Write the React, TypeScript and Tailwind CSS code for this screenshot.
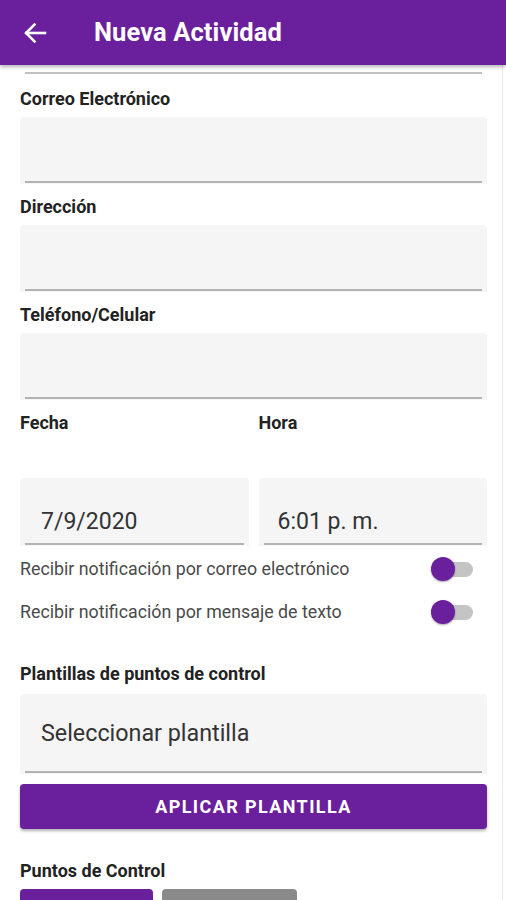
import React from "react";

function Label({ children, className = "" }: { children: React.ReactNode; className?: string }) {
  return (
    <div className={"text-[18px] leading-[20px] font-bold text-[#222] " + className}>{children}</div>
  );
}

function Field({ h, children, className = "" }: { h: string; children?: React.ReactNode; className?: string }) {
  return (
    <div className={"relative bg-[#f5f5f5] rounded-t-[4px] " + h + " " + className}>
      {children}
      <div className="absolute left-[5px] right-[5px] bottom-[1px] h-[2px] bg-[#b3b3b3]" />
    </div>
  );
}

function Toggle() {
  return (
    <div className="relative w-[42px] h-[24px] mr-[14px]">
      <div className="absolute left-[8px] right-0 top-[5px] h-[15px] rounded-full bg-[#c4c4c4]" />
      <div className="absolute left-0 top-0 w-[24px] h-[24px] rounded-full bg-[#6a1f9c] shadow-[0_1px_2px_rgba(0,0,0,0.35)]" />
    </div>
  );
}

export default function App() {
  return (
    <div
      className="w-[506px] h-[900px] overflow-hidden bg-white relative"
      style={{ fontFamily: "Roboto, 'Liberation Sans', sans-serif" }}
    >
      <div className="relative z-10 h-[65px] bg-[#6a1f9c] flex items-center shadow-[0_2px_4px_rgba(0,0,0,0.3)]">
        <svg
          className="ml-[23px]"
          width="24"
          height="24"
          viewBox="0 0 24 24"
          fill="none"
          stroke="white"
          strokeWidth="2.6"
          strokeLinecap="square"
        >
          <path d="M22 12H3.5" />
          <path d="M11.5 3.5L3 12l8.5 8.5" strokeLinejoin="miter" />
        </svg>
        <div className="ml-[47px] text-white text-[25.5px] font-bold leading-none tracking-[0.1px]">
          Nueva Actividad
        </div>
      </div>

      <div className="absolute right-[3px] top-[65px] bottom-0 w-px bg-[#ececec]" />

      <div className="pl-[20px] pr-[19px] flex flex-col">
        <div className="mx-[5px] mt-[7px] h-[2px] bg-[#c0c0c0]" />

        <Label className="mt-[15px]">Correo Electrónico</Label>
        <Field h="h-[67px]" className="mt-[8px]" />

        <Label className="mt-[13px]">Dirección</Label>
        <Field h="h-[67px]" className="mt-[8px]" />

        <Label className="mt-[13px]">Teléfono/Celular</Label>
        <Field h="h-[67px]" className="mt-[8px]" />

        <div className="mt-[13px] flex gap-[10px]">
          <div className="flex-1 flex flex-col">
            <Label>Fecha</Label>
            <Field h="h-[68px]" className="mt-[45px] flex items-end pb-[11px] pl-[21px]">
              <span className="text-[23px] leading-[26px] text-[#333]">7/9/2020</span>
            </Field>
          </div>
          <div className="flex-1 flex flex-col">
            <Label>Hora</Label>
            <Field h="h-[68px]" className="mt-[45px] flex items-end pb-[11px] pl-[19px]">
              <span className="text-[23px] leading-[26px] text-[#333]">6:01 p. m.</span>
            </Field>
          </div>
        </div>

        <div className="mt-[11px] flex items-center justify-between h-[24px]">
          <span className="text-[17.8px] text-[#4a4a4a]">Recibir notificación por correo electrónico</span>
          <Toggle />
        </div>
        <div className="mt-[19px] flex items-center justify-between h-[24px]">
          <span className="text-[17.8px] text-[#4a4a4a]">Recibir notificación por mensaje de texto</span>
          <Toggle />
        </div>

        <Label className="mt-[40px]">Plantillas de puntos de control</Label>
        <Field h="h-[80px]" className="mt-[10px] flex items-center pl-[21px] pb-[2px]">
          <span className="text-[23.3px] leading-[26px] text-[#333]">Seleccionar plantilla</span>
        </Field>

        <button className="mt-[10px] h-[45px] rounded-[4px] bg-[#6a1f9c] text-white text-[18px] font-bold tracking-[1.4px] shadow-[0_2px_3px_rgba(0,0,0,0.3)]">
          APLICAR PLANTILLA
        </button>

        <Label className="mt-[32px]">Puntos de Control</Label>
        <div className="mt-[8px] flex gap-[9px]">
          <div className="w-[133px] h-[40px] rounded-[4px] bg-[#6a1f9c]" />
          <div className="w-[135px] h-[40px] rounded-[4px] bg-[#8a8a8a]" />
        </div>
      </div>
    </div>
  );
}
